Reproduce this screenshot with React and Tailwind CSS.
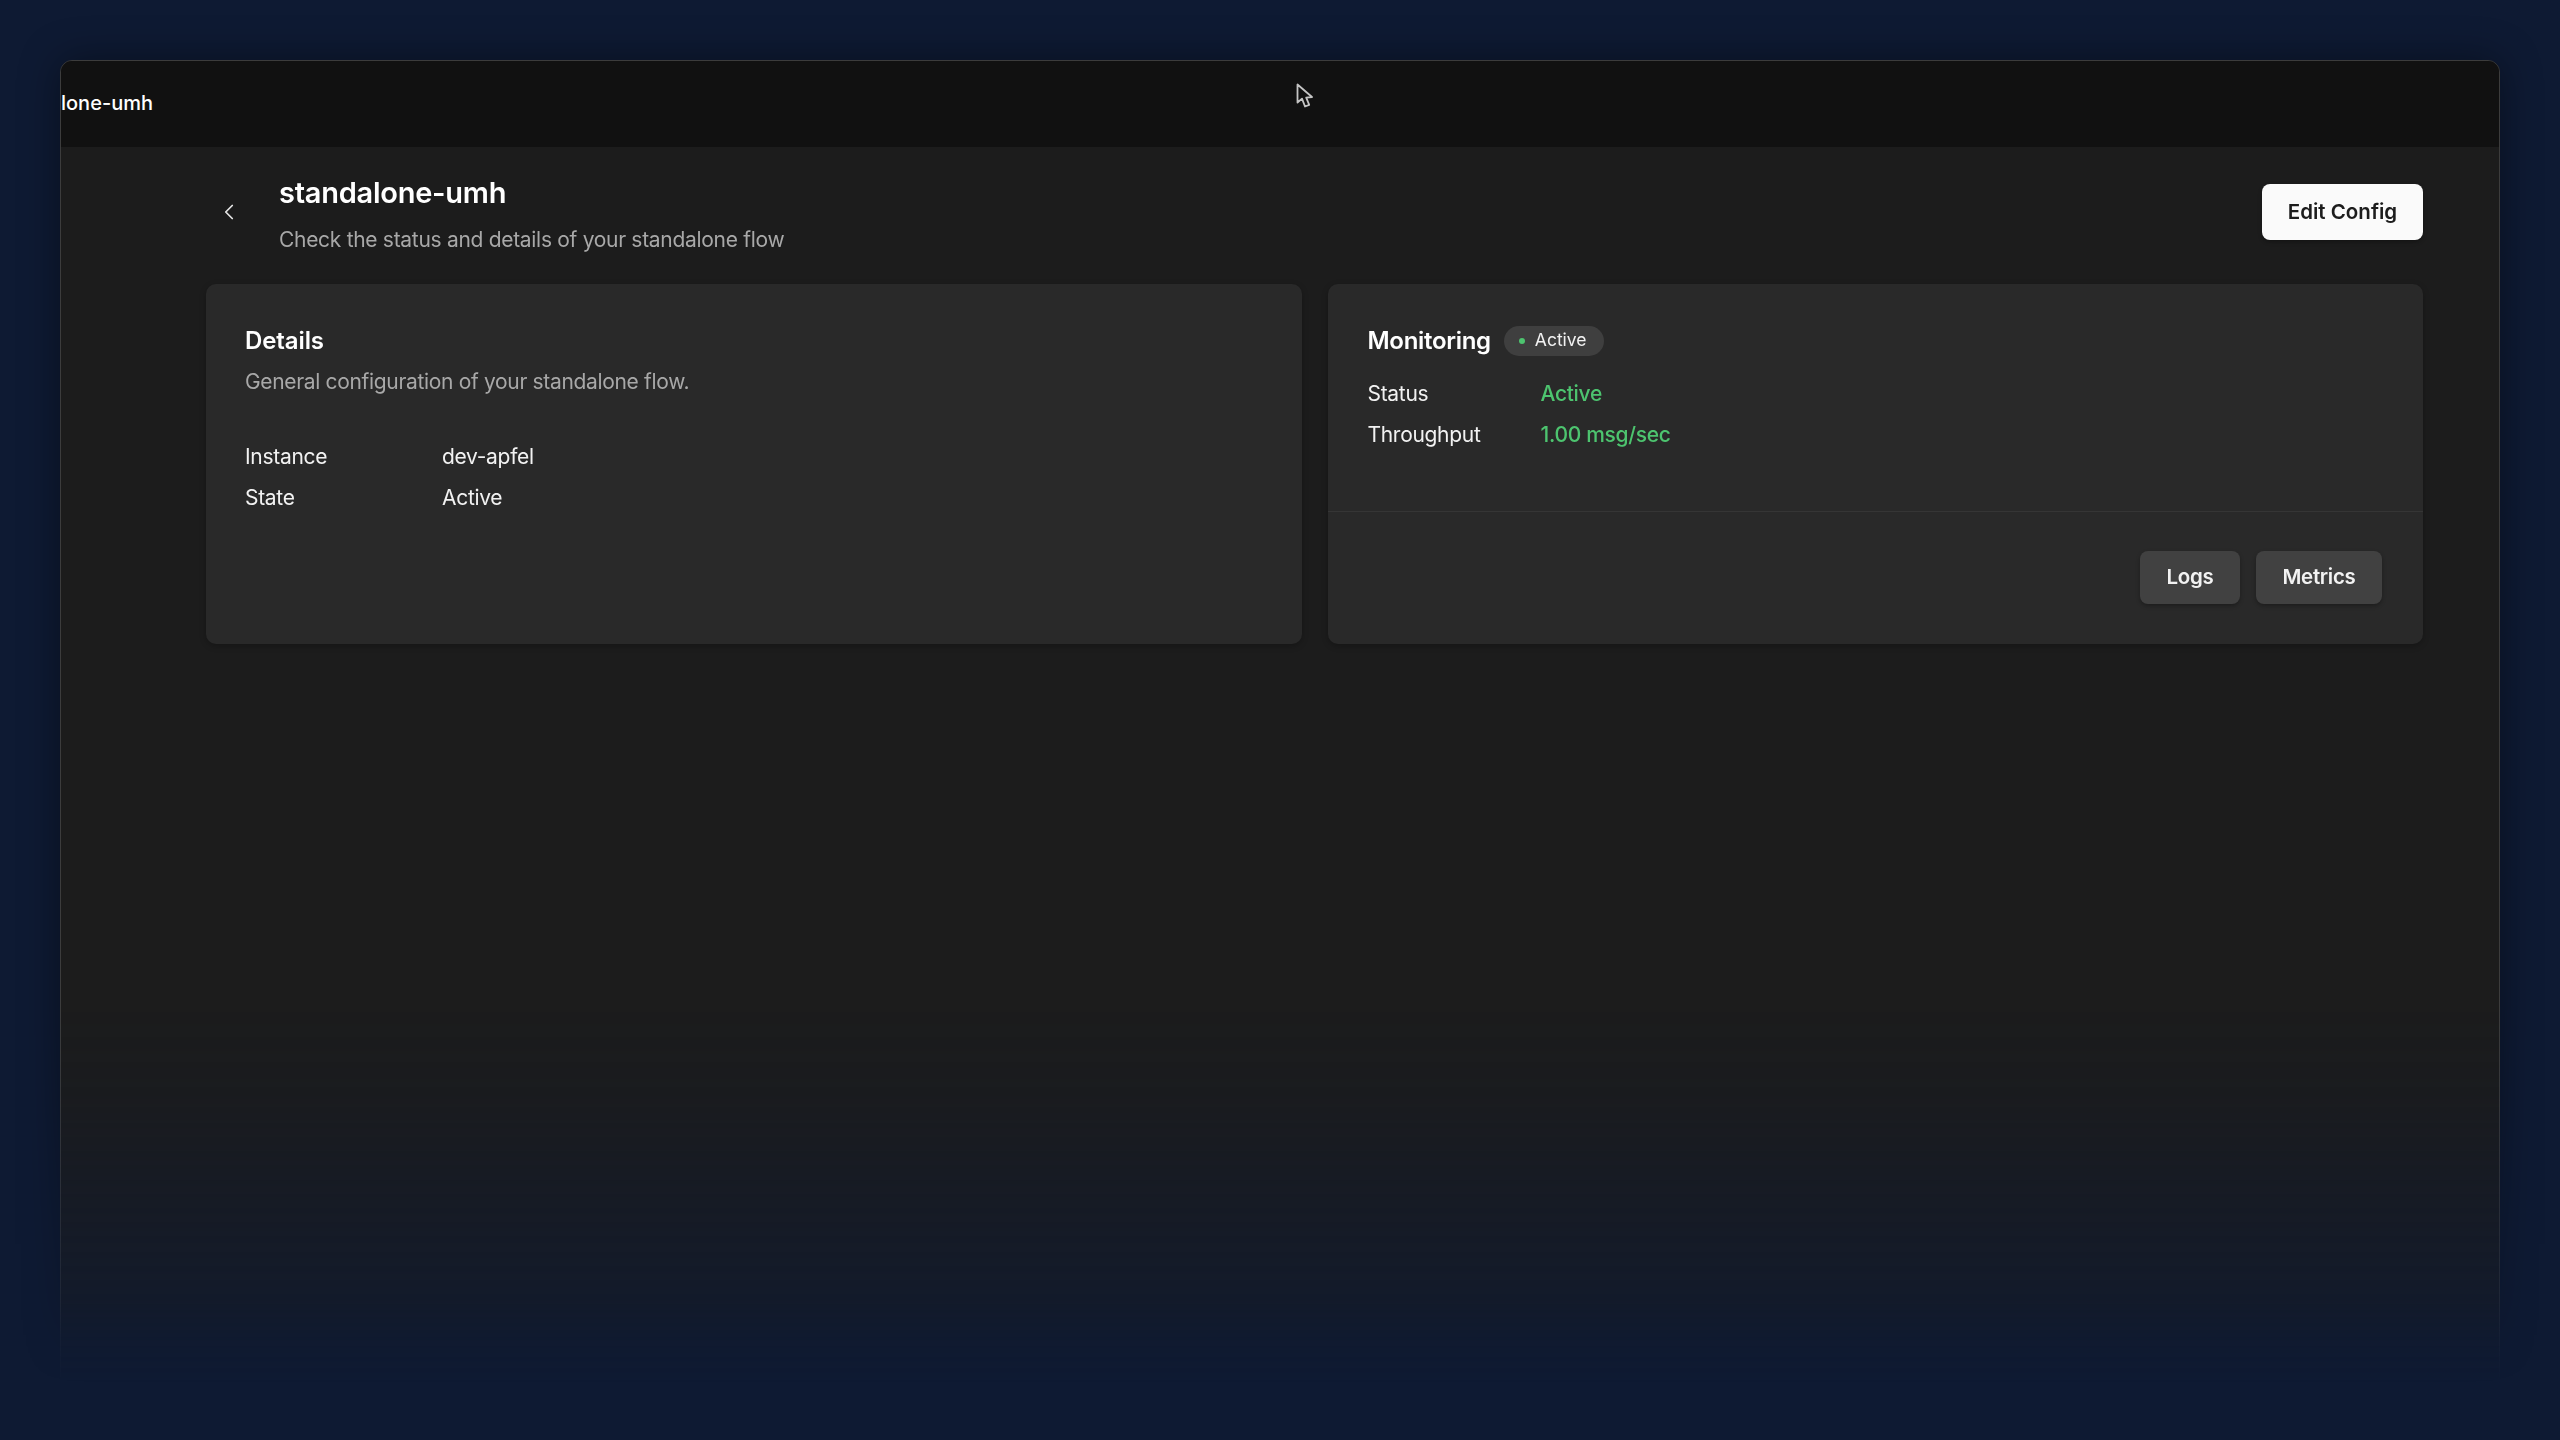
import { ChevronLeft } from "lucide-react";

function Row({ label, value, labelWidth, valueClass = "text-[#f2f2f2]" }) {
  return (
    <div className="flex h-[30px] items-center leading-[30px]">
      <span className="text-[#f2f2f2]" style={{ width: labelWidth }}>{label}</span>
      <span className={valueClass}>{value}</span>
    </div>
  );
}

function GreyButton({ children, width }) {
  return (
    <button
      className="h-[53px] rounded-[8px] bg-[#414141] text-[20.5px] font-semibold text-[#f2f2f2] shadow-[0_2px_4px_rgba(0,0,0,0.3)]"
      style={{ width }}
    >
      {children}
    </button>
  );
}

export default function App() {
  return (
    <div className="relative h-[1440px] w-full overflow-hidden bg-[#0e1a33] font-['Inter',sans-serif] text-[21px] tracking-[-0.3px]">
      <div className="h-full px-[60px] pt-[60px] pb-[60px] [mask-image:linear-gradient(to_bottom,black_1000px,rgba(0,0,0,0.86)_1100px,rgba(0,0,0,0.36)_1300px,rgba(0,0,0,0.14)_1340px,transparent_1385px)]">
        <div className="flex h-full flex-col overflow-hidden rounded-t-[12px] border border-[#3c3c3c] bg-[#1c1c1c] shadow-[0_0_40px_rgba(0,0,0,0.4)]">
          <header className="flex h-[86px] shrink-0 items-center bg-[#111111] pb-[2px] text-[20px] font-medium tracking-normal text-white">
            <span>lone-umh</span>
          </header>

          <main className="pl-[145px] pr-[76px] pt-[28px]">
            <div className="flex h-[109px] items-start">
              <ChevronLeft size={26} strokeWidth={1.6} className="ml-[10px] mt-[24px] text-[#e5e5e5]" />
              <div className="ml-[37px]">
                <h1 className="text-[29px] font-semibold leading-[36px] tracking-[-0.25px] text-white">standalone-umh</h1>
                <p className="mt-[14px] leading-[30px] text-[#a8a8a8]">Check the status and details of your standalone flow</p>
              </div>
              <button className="ml-auto mt-[9px] h-[56px] w-[161px] rounded-[8px] bg-[#fafafa] text-[20.5px] font-semibold tracking-normal text-[#1c1c1c] shadow-[0_2px_4px_rgba(0,0,0,0.3)]">
                Edit Config
              </button>
            </div>

            <div className="grid h-[360px] grid-cols-2 gap-[26px]">
              <section className="rounded-[10px] bg-[#292929] px-[39px] pt-[41px] shadow-[0_2px_6px_rgba(0,0,0,0.25)]">
                <h2 className="text-[24px] font-semibold leading-[32px] tracking-[-0.1px] text-white">Details</h2>
                <p className="mt-[10px] leading-[30px] tracking-[-0.33px] text-[#a8a8a8]">General configuration of your standalone flow.</p>
                <div className="mt-[45px] flex flex-col gap-[11px]">
                  <Row label="Instance" value="dev-apfel" labelWidth={197} />
                  <Row label="State" value="Active" labelWidth={197} />
                </div>
              </section>

              <section className="flex flex-col rounded-[10px] bg-[#292929] shadow-[0_2px_6px_rgba(0,0,0,0.25)]">
                <div className="h-[227px] px-[40px] pt-[41px]">
                  <div className="flex h-[31px] items-center gap-[13px]">
                    <h2 className="text-[24px] font-semibold leading-[32px] tracking-[-0.3px] text-white">Monitoring</h2>
                    <span className="flex h-[30px] w-[100px] items-center gap-[10px] rounded-full bg-[#3f3f3f] pl-[15px] text-[17.5px] tracking-normal text-[#f2f2f2]">
                      <span className="h-[6px] w-[6px] rounded-full bg-[#4dc46f]" />
                      Active
                    </span>
                  </div>
                  <div className="mt-[23px] flex flex-col gap-[11px]">
                    <Row label="Status" value="Active" labelWidth={173} valueClass="font-medium text-[#4dc46f]" />
                    <Row label="Throughput" value="1.00 msg/sec" labelWidth={173} valueClass="font-medium text-[#4dc46f]" />
                  </div>
                </div>
                <div className="flex justify-end gap-[16px] border-t border-[#353535] pr-[41px] pt-[39px]">
                  <GreyButton width={100}>Logs</GreyButton>
                  <GreyButton width={126}>Metrics</GreyButton>
                </div>
              </section>
            </div>
          </main>
        </div>
      </div>

      {/* mouse cursor */}
      <svg className="absolute left-[1295px] top-[82px]" width="20" height="28" viewBox="0 0 20 28" fill="#111111" stroke="#c4c4c4" strokeWidth="1.8" strokeLinejoin="round">
        <path d="M2.5 2.5 L2.5 20.5 L7 16.6 L10 24.5 L14.2 22.8 L11.2 15.6 L17 15 Z" />
      </svg>
    </div>
  );
}
